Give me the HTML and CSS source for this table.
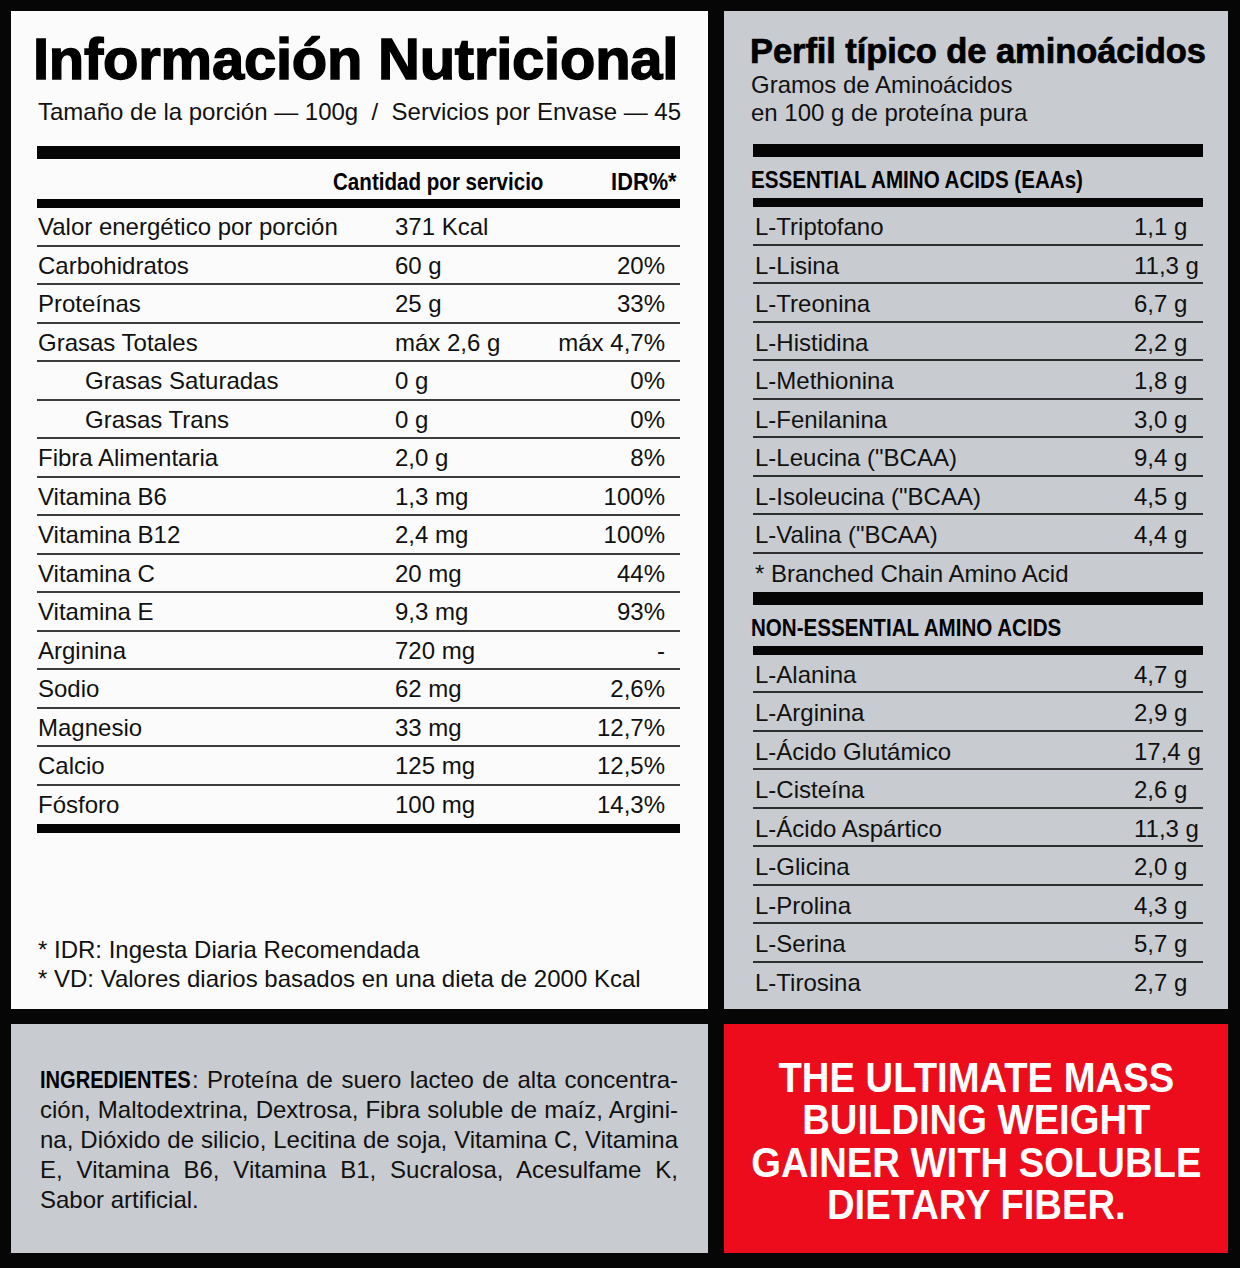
FILE: index.html
```html
<!DOCTYPE html>
<html lang="es">
<head>
<meta charset="utf-8">
<title>Información Nutricional</title>
<link rel="stylesheet" href="styles.css">
</head>
<body>
<div class="page">
  <section class="panel nutri">
    <h1 class="title">Información Nutricional</h1>
    <p class="serving">Tamaño de la porción — 100g &nbsp;/&nbsp; Servicios por Envase — 45</p>
    <div class="bar thick"></div>
    <div class="nt-head"><span class="narrow">Cantidad por servicio</span><span class="narrow idr">IDR%*</span></div>
    <div class="bar mid"></div>
    <div class="nt-rows">
      <div class="nt-row"><span>Valor energético por porción</span><span>371 Kcal</span><span></span></div>
      <div class="nt-row"><span>Carbohidratos</span><span>60 g</span><span>20%</span></div>
      <div class="nt-row"><span>Proteínas</span><span>25 g</span><span>33%</span></div>
      <div class="nt-row"><span>Grasas Totales</span><span>máx 2,6 g</span><span>máx 4,7%</span></div>
      <div class="nt-row"><span class="sub">Grasas Saturadas</span><span>0 g</span><span>0%</span></div>
      <div class="nt-row"><span class="sub">Grasas Trans</span><span>0 g</span><span>0%</span></div>
      <div class="nt-row"><span>Fibra Alimentaria</span><span>2,0 g</span><span>8%</span></div>
      <div class="nt-row"><span>Vitamina B6</span><span>1,3 mg</span><span>100%</span></div>
      <div class="nt-row"><span>Vitamina B12</span><span>2,4 mg</span><span>100%</span></div>
      <div class="nt-row"><span>Vitamina C</span><span>20 mg</span><span>44%</span></div>
      <div class="nt-row"><span>Vitamina E</span><span>9,3 mg</span><span>93%</span></div>
      <div class="nt-row"><span>Arginina</span><span>720 mg</span><span>-</span></div>
      <div class="nt-row"><span>Sodio</span><span>62 mg</span><span>2,6%</span></div>
      <div class="nt-row"><span>Magnesio</span><span>33 mg</span><span>12,7%</span></div>
      <div class="nt-row"><span>Calcio</span><span>125 mg</span><span>12,5%</span></div>
      <div class="nt-row"><span>Fósforo</span><span>100 mg</span><span>14,3%</span></div>
    </div>
    <div class="bar mid"></div>
    <div class="notes">
      <p>* IDR: Ingesta Diaria Recomendada</p>
      <p>* VD: Valores diarios basados en una dieta de 2000 Kcal</p>
    </div>
  </section>

  <section class="panel amino">
    <h2 class="a-title">Perfil típico de aminoácidos</h2>
    <p class="a-sub">Gramos de Aminoácidos<br>en 100 g de proteína pura</p>
    <div class="bar thick a-top"></div>
    <div class="a-head"><span class="narrow">ESSENTIAL AMINO ACIDS (EAAs)</span></div>
    <div class="bar mid"></div>
    <div class="a-rows">
      <div class="a-row"><span>L-Triptofano</span><span>1,1 g</span></div>
      <div class="a-row"><span>L-Lisina</span><span>11,3 g</span></div>
      <div class="a-row"><span>L-Treonina</span><span>6,7 g</span></div>
      <div class="a-row"><span>L-Histidina</span><span>2,2 g</span></div>
      <div class="a-row"><span>L-Methionina</span><span>1,8 g</span></div>
      <div class="a-row"><span>L-Fenilanina</span><span>3,0 g</span></div>
      <div class="a-row"><span>L-Leucina ("BCAA)</span><span>9,4 g</span></div>
      <div class="a-row"><span>L-Isoleucina ("BCAA)</span><span>4,5 g</span></div>
      <div class="a-row"><span>L-Valina ("BCAA)</span><span>4,4 g</span></div>
      <div class="a-row note"><span>* Branched Chain Amino Acid</span></div>
    </div>
    <div class="bar sec"></div>
    <div class="a-head"><span class="narrow">NON-ESSENTIAL AMINO ACIDS</span></div>
    <div class="bar mid"></div>
    <div class="a-rows">
      <div class="a-row"><span>L-Alanina</span><span>4,7 g</span></div>
      <div class="a-row"><span>L-Arginina</span><span>2,9 g</span></div>
      <div class="a-row"><span>L-Ácido Glutámico</span><span>17,4 g</span></div>
      <div class="a-row"><span>L-Cisteína</span><span>2,6 g</span></div>
      <div class="a-row"><span>L-Ácido Aspártico</span><span>11,3 g</span></div>
      <div class="a-row"><span>L-Glicina</span><span>2,0 g</span></div>
      <div class="a-row"><span>L-Prolina</span><span>4,3 g</span></div>
      <div class="a-row"><span>L-Serina</span><span>5,7 g</span></div>
      <div class="a-row last"><span>L-Tirosina</span><span>2,7 g</span></div>
    </div>
  </section>

  <section class="panel ingr">
    <p class="ingr-text">
      <span class="ln"><b class="ingr-label"><span class="narrow">INGREDIENTES</span></b>: Proteína de suero lacteo de alta concentra-</span>
      <span class="ln">ción, Maltodextrina, Dextrosa, Fibra soluble de maíz, Argini-</span>
      <span class="ln">na, Dióxido de silicio, Lecitina de soja, Vitamina C, Vitamina</span>
      <span class="ln">E, Vitamina B6, Vitamina B1, Sucralosa, Acesulfame K,</span>
      <span class="ln end">Sabor artificial.</span>
    </p>
  </section>

  <section class="panel promo">
    <p class="promo-text">THE ULTIMATE MASS<br>BUILDING WEIGHT<br>GAINER WITH SOLUBLE<br>DIETARY FIBER.</p>
  </section>
</div>
</body>
</html>
```
FILE: styles.css
```css
html, body {
  margin: 0;
  padding: 0;
  background: #060606;
}

.page {
  width: 1240px;
  height: 1268px;
  box-sizing: border-box;
  padding: 11px 12px 15px 11px;
  display: grid;
  grid-template-columns: 697px 504px;
  grid-template-rows: 998px 229px;
  column-gap: 16px;
  row-gap: 15px;
  font-family: "Liberation Sans", Arial, sans-serif;
  color: #111;
}

.panel {
  box-sizing: border-box;
  min-width: 0;
}

.bar {
  background: #050505;
}
.bar.thick { height: 13px; margin-top: 19px; }
.bar.mid { height: 9px; }
.bar.sec { height: 13px; }

/* condensed bold headings (no narrow face installed) */
.narrow {
  display: inline-block;
  font-weight: bold;
  transform: scaleX(0.84);
  transform-origin: left center;
  white-space: nowrap;
}
.narrow.idr {
  transform: scaleX(0.89);
  transform-origin: right center;
}

/* ---------- Nutrition panel ---------- */
.nutri {
  background: #fbfbfb;
  padding: 16px 28px 16px 26px;
  display: flex;
  flex-direction: column;
}

.title {
  margin: 0 0 0 -4px;
  font-size: 58px;
  line-height: 64px;
  font-weight: bold;
  letter-spacing: -0.25px;
  color: #000;
  -webkit-text-stroke: 1.4px #000;
  white-space: nowrap;
}

.serving {
  margin: 6px 0 0;
  padding: 0 3px 0 1px;
  font-size: 24px;
  line-height: 30px;
  text-align: justify;
  text-align-last: justify;
  white-space: nowrap;
}

.nt-head {
  height: 40px;
  display: flex;
  justify-content: space-between;
  padding: 0 3px 0 296px;
  font-weight: bold;
  font-size: 24.5px;
  line-height: 46px;
  color: #000;
}

.nt-row {
  display: grid;
  grid-template-columns: 357px 1fr auto;
  height: 38.5px;
  box-sizing: border-box;
  border-bottom: 2px solid #3d3d3d;
  padding: 0 15px 0 1px;
  font-size: 24px;
  line-height: 38px;
  white-space: nowrap;
}
.nt-row:last-child { border-bottom: none; }
.nt-row .sub { padding-left: 47px; }

.notes {
  margin-top: auto;
  padding-left: 1px;
  font-size: 24px;
  line-height: 29px;
}
.notes p { margin: 0; }

/* ---------- Amino panel ---------- */
.amino {
  background: #c8cbcf;
  padding: 20px 25px 0 29px;
}

.a-title {
  margin: 0 0 0 -3px;
  font-size: 34.5px;
  line-height: 40px;
  font-weight: bold;
  letter-spacing: -0.08px;
  color: #000;
  -webkit-text-stroke: 0.7px #000;
  white-space: nowrap;
}

.a-sub {
  margin: 0 0 0 -2px;
  font-size: 24px;
  line-height: 28px;
}

.bar.thick.a-top { margin-top: 17px; }

.a-head {
  height: 41px;
  margin-left: -2px;
  font-size: 24.5px;
  line-height: 46px;
  color: #000;
}

.a-row {
  display: grid;
  grid-template-columns: 379px 1fr;
  height: 38.5px;
  box-sizing: border-box;
  border-bottom: 2px solid #2e2e2e;
  padding-left: 2px;
  font-size: 24px;
  line-height: 39px;
  white-space: nowrap;
}
.a-row.note { border-bottom: none; height: 38px; }
.a-row.last { border-bottom: none; }

/* ---------- Ingredients ---------- */
.ingr {
  background: #c8cbcf;
  padding: 41px 30px 0 29px;
}

.ingr-text {
  margin: 0;
  font-size: 24px;
  line-height: 30px;
}
.ingr-text .ln {
  display: block;
  text-align: justify;
  text-align-last: justify;
}
.ingr-text .ln.end { text-align-last: left; }

.ingr-label {
  display: inline-block;
  width: 152px;
  font-size: 24.5px;
  color: #000;
  white-space: nowrap;
}
.ingr-label .narrow { transform: scaleX(0.82); }

/* ---------- Promo ---------- */
.promo {
  background: #ec0c1b;
  display: flex;
  justify-content: center;
  padding-top: 33px;
}

.promo-text {
  margin: 0;
  color: #fff;
  font-size: 42px;
  line-height: 42.3px;
  font-weight: bold;
  text-align: center;
  white-space: nowrap;
  transform: scaleX(0.91);
}
```
